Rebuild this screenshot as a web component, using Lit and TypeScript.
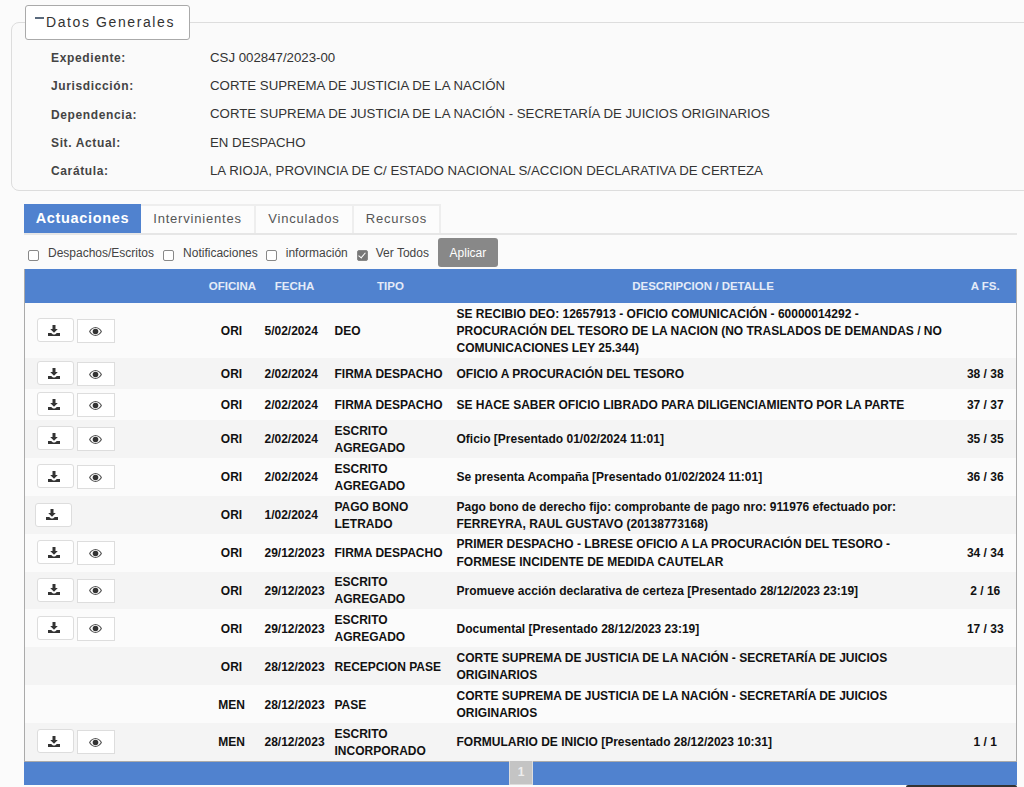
import { LitElement, html, css, svg } from "lit";
import { customElement } from "lit/decorators.js";

type Row = { b: number; o: string; f: string; t: string; d: string; a: string };
const rows: Row[] = [
  { b: 2, o: "ORI", f: "5/02/2024", t: "DEO", d: "SE RECIBIO DEO: 12657913 - OFICIO COMUNICACIÓN - 60000014292 - PROCURACIÓN DEL TESORO DE LA NACION (NO TRASLADOS DE DEMANDAS / NO COMUNICACIONES LEY 25.344)", a: "" },
  { b: 2, o: "ORI", f: "2/02/2024", t: "FIRMA DESPACHO", d: "OFICIO A PROCURACIÓN DEL TESORO", a: "38 / 38" },
  { b: 2, o: "ORI", f: "2/02/2024", t: "FIRMA DESPACHO", d: "SE HACE SABER OFICIO LIBRADO PARA DILIGENCIAMIENTO POR LA PARTE", a: "37 / 37" },
  { b: 2, o: "ORI", f: "2/02/2024", t: "ESCRITO AGREGADO", d: "Oficio [Presentado 01/02/2024 11:01]", a: "35 / 35" },
  { b: 2, o: "ORI", f: "2/02/2024", t: "ESCRITO AGREGADO", d: "Se presenta Acompaña [Presentado 01/02/2024 11:01]", a: "36 / 36" },
  { b: 1, o: "ORI", f: "1/02/2024", t: "PAGO BONO LETRADO", d: "Pago bono de derecho fijo: comprobante de pago nro: 911976 efectuado por: FERREYRA, RAUL GUSTAVO (20138773168)", a: "" },
  { b: 2, o: "ORI", f: "29/12/2023", t: "FIRMA DESPACHO", d: "PRIMER DESPACHO - LBRESE OFICIO A LA PROCURACIÓN DEL TESORO - FORMESE INCIDENTE DE MEDIDA CAUTELAR", a: "34 / 34" },
  { b: 2, o: "ORI", f: "29/12/2023", t: "ESCRITO AGREGADO", d: "Promueve acción declarativa de certeza [Presentado 28/12/2023 23:19]", a: "2 / 16" },
  { b: 2, o: "ORI", f: "29/12/2023", t: "ESCRITO AGREGADO", d: "Documental [Presentado 28/12/2023 23:19]", a: "17 / 33" },
  { b: 0, o: "ORI", f: "28/12/2023", t: "RECEPCION PASE", d: "CORTE SUPREMA DE JUSTICIA DE LA NACIÓN - SECRETARÍA DE JUICIOS ORIGINARIOS", a: "" },
  { b: 0, o: "MEN", f: "28/12/2023", t: "PASE", d: "CORTE SUPREMA DE JUSTICIA DE LA NACIÓN - SECRETARÍA DE JUICIOS ORIGINARIOS", a: "" },
  { b: 2, o: "MEN", f: "28/12/2023", t: "ESCRITO INCORPORADO", d: "FORMULARIO DE INICIO [Presentado 28/12/2023 10:31]", a: "1 / 1" },
];

const info: [string, string][] = [
  ["Expediente:", "CSJ 002847/2023-00"],
  ["Jurisdicción:", "CORTE SUPREMA DE JUSTICIA DE LA NACIÓN"],
  ["Dependencia:", "CORTE SUPREMA DE JUSTICIA DE LA NACIÓN - SECRETARÍA DE JUICIOS ORIGINARIOS"],
  ["Sit. Actual:", "EN DESPACHO"],
  ["Carátula:", "LA RIOJA, PROVINCIA DE C/ ESTADO NACIONAL S/ACCION DECLARATIVA DE CERTEZA"],
];

const dl = svg`<svg class="i-dl" width="12" height="11" viewBox="0 0 12 11"><path fill="#333" d="M4.500 0h3v4h2.300L6 7.800 2.200 4h2.300zM0 8h3.200L5 9.500h2L8.800 8H12v3H0z"/></svg>`;
const eye = svg`<svg class="i-eye" width="13" height="9" viewBox="0 0 13 9"><path fill="#555" fill-rule="evenodd" d="M6.500 0C9.500 0 11.800 2.200 13 4.500 11.800 6.800 9.500 9 6.500 9S1.200 6.800 0 4.500C1.200 2.200 3.500 0 6.500 0zM6.500 1.100C4.300 1.100 2.400 2.600 1.300 4.500c1.100 1.900 3 3.400 5.200 3.400s4.100-1.500 5.200-3.400C10.600 2.600 8.700 1.100 6.500 1.100z"/><circle cx="6.500" cy="4.500" r="2.800" fill="#333"/></svg>`;

@customElement("app-root")
export class AppRoot extends LitElement {
  static styles = css`
    :host { display: block; height: 787px; overflow: hidden; position: relative; background: #fbfbfb; font-family: "Liberation Sans", Arial, sans-serif; color: #333; box-sizing: border-box; padding-top: 5px; }
    * { box-sizing: border-box; }
    fieldset { margin: 0 -20px 0 11px; padding: 0 0 5px 38px; border: 1px solid #ddd; border-radius: 8px; background: #fafafa; height: 186px; }
    legend { margin-left: -25px; padding: 0 0 2px 9px; width: 165px; height: 35px; border: 1px solid #aaa; border-radius: 3px; background: #fff; font-size: 14px; letter-spacing: 1.6px; color: #333; display: flex; align-items: center; }
    .minus { width: 9px; height: 2px; background: #5a6a7d; margin: 0 2px 7px 0; flex: none; }
    .info { display: grid; grid-template-columns: 160px 1fr; grid-auto-rows: 28.3px; align-items: center; margin-top: 4px; font-size: 13.250px; }
    .info b { font-size: 12px; color: #444; letter-spacing: .63px; padding-left: 1px; }
    .info span { color: #333; padding-bottom: 2px; }
    .main { margin: 13px 7px 0 24px; }
    .tabs { display: flex; height: 31px; border-bottom: 2px solid #e6e6e6; }
    .tab { display: flex; align-items: center; justify-content: center; height: 29px; padding-bottom: 2px; font-size: 13px; letter-spacing: .8px; color: #555; border-right: 2px solid #eee; border-top: 2px solid #eee; background: #fcfcfc; }
    .tab.on { background: #5082cf; color: #fff; font-weight: 700; font-size: 14.500px; letter-spacing: .68px; width: 117px; border: 0; }
    .filters { display: flex; align-items: center; height: 34px; padding: 3px 0 2px 4px; font-size: 12px; color: #444; }
    .filters input { appearance: none; width: 11px; height: 11px; margin: 5px 9px 0 0; border: 1px solid #888; border-radius: 2px; background: #fff; flex: none; position: relative; }
    .filters input:checked { background: #777; margin: 5px 8px 0 1px; }
    .filters input:checked::after { content: ""; position: absolute; left: 2.500px; top: 0; width: 3px; height: 6px; border: solid #fff; border-width: 0 1.500px 1.500px 0; transform: rotate(40deg); }
    .filters label { margin-right: 9px; white-space: nowrap; }
    .filters label.tight { margin-right: 8px; }
    .filters .apply { width: 60px; height: 29px; margin-left: 1px; background: #888; color: #fff; border: 0; border-radius: 3px; font: 12px "Liberation Sans", Arial, sans-serif; }
    table { width: 993px; border-collapse: collapse; table-layout: fixed; border-left: 1px solid #aaa; border-right: 1px solid #aaa; font-size: 12px; font-weight: 700; color: #111; }
    th { background: #5082cf; color: #e4ebf8; height: 34px; padding: 0; font-size: 11.500px; text-align: center; }
    th.of { padding-left: 2px; }
    th.ti { padding-right: 5px; }
    th.de { padding-left: 7px; }
    th.af { padding-left: 10px; }
    td { padding: 2.800px 0 .8px; line-height: 17.140px; height: 31px; vertical-align: middle; }
    tbody tr:nth-child(even) { background: #f4f4f4; }
    tbody tr:nth-child(odd) { background: #fbfbfb; }
    td.c { text-align: center; }
    td.f { padding-left: 7px; }
    td.t { padding-left: 3px; }
    td.d { padding-left: 2px; }
    td.a { text-align: center; padding-left: 10px; }
    td.btns { padding: 1.800px 0 1.800px 12px; white-space: nowrap; font-size: 0; line-height: 0; }
    td.btns.one { padding-left: 10px; }
    .btn { display: inline-flex; align-items: center; justify-content: center; height: 24px; background: #fff; border: 1px solid #ddd; border-radius: 3px; padding: 0 4px 0 0; margin-right: 3px; width: 37px; }
    .btn.e { width: 38px; border-radius: 0; padding: 0 2px 0 0; }
    .foot { width: 993px; height: 24px; background: #5082cf; display: flex; justify-content: center; border-top: 1px solid #aaa; }
    .page { width: 24px; height: 24px; background: #c4c4c4; border: 1px solid #ddd; border-top: 0; color: #eee; font-size: 12px; font-weight: 700; display: flex; align-items: center; justify-content: center; margin: -1px 0 0 1px; }
    .dark { position: absolute; left: 906px; top: 785px; width: 111px; height: 2px; background: #333; border-radius: 3px 3px 0 0; }
  `;

  render() {
    return html`
      <fieldset>
        <legend><i class="minus"></i>Datos Generales</legend>
        <div class="info">
          ${info.map(([k, v]) => html`<b>${k}</b><span>${v}</span>`)}
        </div>
      </fieldset>
      <div class="main">
        <div class="tabs">
          <div class="tab on">Actuaciones</div>
          <div class="tab" style="width:115px">Intervinientes</div>
          <div class="tab" style="width:98px">Vinculados</div>
          <div class="tab" style="width:87px">Recursos</div>
        </div>
        <div class="filters">
          <input type="checkbox" /><label>Despachos/Escritos</label>
          <input type="checkbox" /><label class="tight">Notificaciones</label>
          <input type="checkbox" /><label class="tight">información</label>
          <input type="checkbox" checked /><label class="tight">Ver Todos</label>
          <button class="apply">Aplicar</button>
        </div>
        <table>
          <colgroup><col style="width:181px"/><col style="width:52px"/><col style="width:74px"/><col style="width:123px"/><col style="width:490px"/><col/></colgroup>
          <thead><tr><th></th><th class="of">OFICINA</th><th>FECHA</th><th class="ti">TIPO</th><th class="de">DESCRIPCION / DETALLE</th><th class="af">A FS.</th></tr></thead>
          <tbody>
            ${rows.map((r) => html`<tr>
              <td class="btns ${r.b === 1 ? "one" : ""}">${r.b > 0 ? html`<span class="btn">${dl}</span>` : ""}${r.b > 1 ? html`<span class="btn e">${eye}</span>` : ""}</td>
              <td class="c">${r.o}</td><td class="f">${r.f}</td><td class="t">${r.t}</td><td class="d">${r.d}</td><td class="a">${r.a}</td>
            </tr>`)}
          </tbody>
        </table>
        <div class="foot"><div class="page">1</div></div>
      </div>
      <div class="dark"></div>
    `;
  }
}
